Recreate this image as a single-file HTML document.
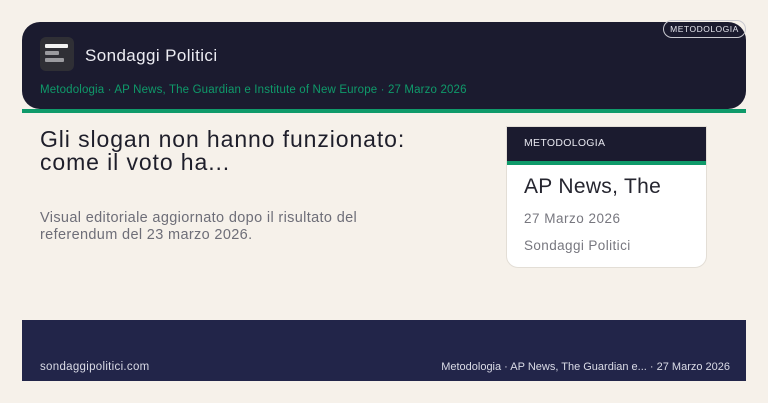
<!DOCTYPE html>
<html><head><meta charset="utf-8"><style>
*{margin:0;padding:0;box-sizing:border-box}
body{width:768px;height:403px;background:#f6f1ea;font-family:"Liberation Sans",sans-serif;position:relative;overflow:hidden}
.hdr{position:absolute;left:22px;top:22px;width:724px;height:87px;background:#1b1b2f;border-radius:18px}
.gl{position:absolute;left:22px;top:109px;width:724px;height:4px;background:#0f9a6a}
.logo{position:absolute;left:40px;top:37px;width:34px;height:34px;background:#2f2f35;border-radius:6px}
.logo i{position:absolute;left:5px;height:4px;background:#9b9b9f;border-radius:1px}
.t1{position:absolute;left:85px;top:46px;color:#ececf2;font-size:17px;letter-spacing:.4px}
.sub{position:absolute;left:40px;top:84px;color:#0f9a6a;font-size:11.5px;letter-spacing:.15px}
.badge{position:absolute;left:663px;top:20px;width:83px;height:18px;border:1px solid #c9c9d0;border-radius:9px;color:#e6e6ee;font-size:8.5px;letter-spacing:.5px;text-align:center;line-height:16px}
h1{position:absolute;left:40px;top:128px;font-weight:normal;font-size:23px;letter-spacing:.9px;line-height:23px;color:#1e1e2a}
.desc{position:absolute;left:40px;top:210px;font-size:14.5px;letter-spacing:.35px;line-height:17px;color:#6e6e78}
.card{position:absolute;left:506px;top:126px;width:201px;height:142px;background:#fff;border:1px solid #e3ded6;border-radius:0 0 12px 12px;overflow:hidden}
.ch{background:#1b1b2f;color:#e6e6ee;font-size:10.5px;letter-spacing:.3px;padding:10px 0 0 17px;border-bottom:4px solid #0f9a6a;height:38px}
.c1{position:absolute;left:17px;top:48px;font-size:21px;letter-spacing:.3px;color:#25252f}
.c2{position:absolute;left:17px;top:84px;font-size:13.5px;letter-spacing:.5px;color:#77777f}
.c3{position:absolute;left:17px;top:111px;font-size:13.5px;letter-spacing:.4px;color:#77777f}
.ft{position:absolute;left:22px;top:320px;width:724px;height:61px;background:#222549;color:#dadbe6;font-size:11.5px}
.ft .l{position:absolute;left:18px;top:41px;letter-spacing:.3px}
.ft .r{position:absolute;right:16px;top:41px;font-size:11px}
</style></head><body>
<div class="hdr"></div><div class="gl"></div>
<div class="logo"><i style="top:7px;width:23px;background:#f2f2f2"></i><i style="top:14px;width:14px"></i><i style="top:21px;width:19px"></i></div>
<div class="t1">Sondaggi Politici</div>
<div class="sub">Metodologia · AP News, The Guardian e Institute of New Europe · 27 Marzo 2026</div>
<div class="badge">METODOLOGIA</div>
<h1>Gli slogan non hanno funzionato:<br>come il voto ha...</h1>
<div class="desc">Visual editoriale aggiornato dopo il risultato del<br>referendum del 23 marzo 2026.</div>
<div class="card"><div class="ch">METODOLOGIA</div>
<div class="c1">AP News, The</div><div class="c2">27 Marzo 2026</div><div class="c3">Sondaggi Politici</div></div>
<div class="ft"><span class="l">sondaggipolitici.com</span><span class="r">Metodologia · AP News, The Guardian e... · 27 Marzo 2026</span></div>
</body></html>
